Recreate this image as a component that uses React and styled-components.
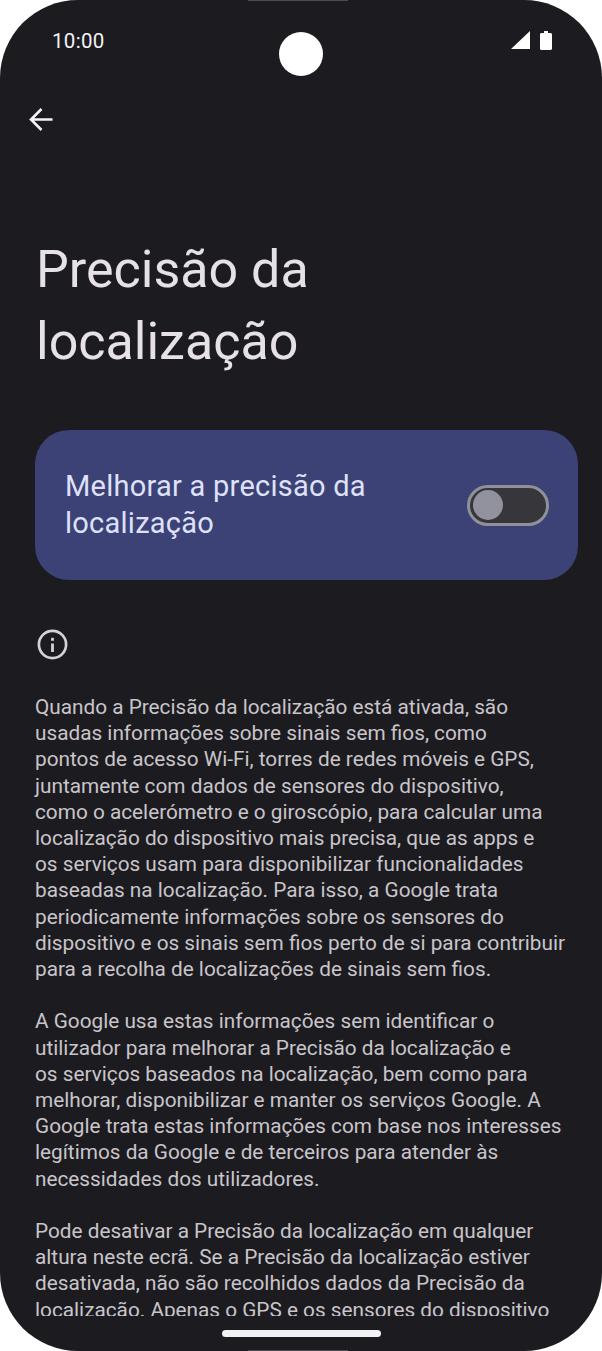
import React from 'react'
import styled, { createGlobalStyle } from 'styled-components'

const GlobalStyle = createGlobalStyle`
    html, body {
        margin: 0;
        padding: 0;
        background: #ffffff;
    }
    * {
        box-sizing: border-box;
    }
`

const Phone = styled.div`
    position: relative;
    width: 602px;
    height: 1351px;
    display: flex;
    flex-direction: column;
    background: #1c1b20;
    border-radius: 78px;
    overflow: hidden;
    font-family: Roboto, 'Liberation Sans', sans-serif;
`

const EdgeMark = styled.div`
    position: absolute;
    left: 248px;
    width: 100px;
    height: 1px;
    background: #4a4a4f;
    ${(p) => (p.bottom ? 'bottom: 0;' : 'top: 0;')}
`

const Camera = styled.div`
    position: absolute;
    left: 279px;
    top: 32px;
    width: 44px;
    height: 44px;
    border-radius: 50%;
    background: #ffffff;
`

const StatusBar = styled.div`
    flex: none;
    height: 80px;
    padding: 31px 50px 0 52px;
    display: flex;
    justify-content: space-between;
    align-items: flex-start;
`

const Clock = styled.span`
    font-size: 20.5px;
    line-height: 20px;
    color: #f4f3f6;
    letter-spacing: 0.3px;
`

const StatusIcons = styled.div`
    display: flex;
    gap: 10px;
`

const TopBar = styled.div`
    flex: none;
    height: 80px;
    padding: 27px 0 0 29px;
`

const Title = styled.h1`
    flex: none;
    margin: 0;
    padding: 0 36px;
    height: 270px;
    padding-top: 74px;
    font-size: 52px;
    line-height: 72px;
    font-weight: 400;
    color: #e6e1e6;
`

const ToggleCard = styled.div`
    flex: none;
    margin: 0 24px 0 35px;
    height: 150px;
    padding: 0 29px 0 30px;
    display: flex;
    align-items: center;
    justify-content: space-between;
    background: #3c4275;
    border-radius: 34px;
`

const ToggleLabel = styled.div`
    font-size: 29px;
    line-height: 37px;
    letter-spacing: 0.25px;
    color: #dfe1f9;
`

const Switch = styled.div`
    flex: none;
    width: 82px;
    height: 41px;
    padding: 0 0 0 3px;
    display: flex;
    align-items: center;
    background: #36363b;
    border: 3px solid #8f9099;
    border-radius: 21px;
`

const Thumb = styled.div`
    width: 30px;
    height: 30px;
    border-radius: 50%;
    background: #92929e;
`

const InfoRow = styled.div`
    flex: none;
    height: 114px;
    padding: 48px 0 0 36px;
`

const Body = styled.div`
    flex: none;
    height: 622px;
    padding: 0 0 0 35px;
    overflow: hidden;
    color: #c9c5ca;
    font-size: 20.78px;
    line-height: 26.2px;
`

const Paragraph = styled.p`
    margin: 0 0 26.2px;
    white-space: nowrap;
`

const Line = styled.span`
    display: block;
`

const HomeIndicator = styled.div`
    position: absolute;
    left: 222px;
    bottom: 14px;
    width: 159px;
    height: 7px;
    border-radius: 4px;
    background: #f1f0f3;
`

const paragraphs = [
    [
        'Quando a Precisão da localização está ativada, são',
        'usadas informações sobre sinais sem fios, como',
        'pontos de acesso Wi-Fi, torres de redes móveis e GPS,',
        'juntamente com dados de sensores do dispositivo,',
        'como o acelerómetro e o giroscópio, para calcular uma',
        'localização do dispositivo mais precisa, que as apps e',
        'os serviços usam para disponibilizar funcionalidades',
        'baseadas na localização. Para isso, a Google trata',
        'periodicamente informações sobre os sensores do',
        'dispositivo e os sinais sem fios perto de si para contribuir',
        'para a recolha de localizações de sinais sem fios.',
    ],
    [
        'A Google usa estas informações sem identificar o',
        'utilizador para melhorar a Precisão da localização e',
        'os serviços baseados na localização, bem como para',
        'melhorar, disponibilizar e manter os serviços Google. A',
        'Google trata estas informações com base nos interesses',
        'legítimos da Google e de terceiros para atender às',
        'necessidades dos utilizadores.',
    ],
    [
        'Pode desativar a Precisão da localização em qualquer',
        'altura neste ecrã. Se a Precisão da localização estiver',
        'desativada, não são recolhidos dados da Precisão da',
        'localização. Apenas o GPS e os sensores do dispositivo',
    ],
]

export default function App() {
    return (
        <>
            <GlobalStyle />
            <Phone>
                <EdgeMark />
                <Camera />
                <StatusBar>
                    <Clock>10:00</Clock>
                    <StatusIcons>
                        <svg width="19" height="18" viewBox="0 0 19 18">
                            <path d="M19 0V18H0Z" fill="#fff" />
                        </svg>
                        <svg width="12" height="19" viewBox="0 0 12 19">
                            <path
                                d="M4 0h4v2h2.500c.8 0 1.500.7 1.500 1.500V17.500c0 .8-.7 1.500-1.500 1.500h-9C.7 19 0 18.300 0 17.500V3.500C0 2.700.7 2 1.500 2H4Z"
                                fill="#fff"
                            />
                        </svg>
                    </StatusIcons>
                </StatusBar>
                <TopBar>
                    <svg width="25" height="25" viewBox="0 0 25 25">
                        <path
                            d="M23.500 12.500H2.500M12.500 2 2 12.500 12.500 23"
                            fill="none"
                            stroke="#f4f3f6"
                            strokeWidth="2.600"
                        />
                    </svg>
                </TopBar>
                <Title>
                    Precisão da
                    <br />
                    localização
                </Title>
                <ToggleCard>
                    <ToggleLabel>
                        Melhorar a precisão da
                        <br />
                        localização
                    </ToggleLabel>
                    <Switch>
                        <Thumb />
                    </Switch>
                </ToggleCard>
                <InfoRow>
                    <svg width="33" height="33" viewBox="0 0 33 33">
                        <circle
                            cx="16.500"
                            cy="16.500"
                            r="13.600"
                            fill="none"
                            stroke="#d5d1d6"
                            strokeWidth="2.700"
                        />
                        <rect x="15.100" y="15.500" width="2.800" height="8.500" fill="#d5d1d6" />
                        <rect x="15.100" y="9.800" width="2.800" height="3" fill="#d5d1d6" />
                    </svg>
                </InfoRow>
                <Body>
                    {paragraphs.map((lines) => (
                        <Paragraph key={lines[0]}>
                            {lines.map((line) => (
                                <Line key={line}>{line}</Line>
                            ))}
                        </Paragraph>
                    ))}
                </Body>
                <HomeIndicator />
                <EdgeMark bottom />
            </Phone>
        </>
    )
}
